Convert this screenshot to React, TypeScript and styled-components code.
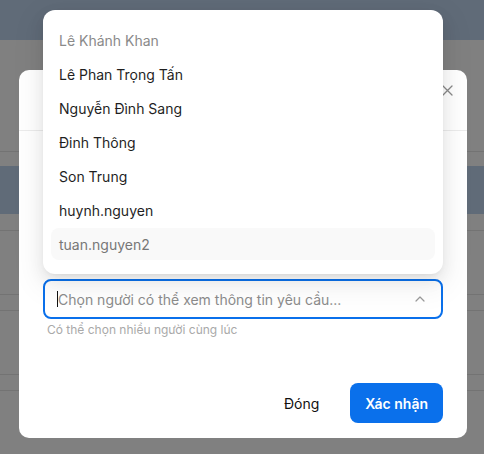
import React from "react";
import styled, { createGlobalStyle } from "styled-components";

const Global = createGlobalStyle`
  html, body { margin: 0; padding: 0; }
  body {
    font-family: Inter, "Noto Sans", "Liberation Sans", sans-serif;
    -webkit-font-smoothing: antialiased;
  }
  * { box-sizing: border-box; }
`;

const Page = styled.div`
  position: relative;
  width: 484px;
  height: 454px;
  overflow: hidden;
  background: #808080;
  display: flex;
  flex-direction: column;
`;

const TopBar = styled.div`
  height: 40px;
  background: #606b78;
  flex-shrink: 0;
`;

const BgRow = styled.div<{ $h: number; $band?: boolean; $line?: boolean }>`
  height: ${(p) => p.$h}px;
  flex-shrink: 0;
  background: ${(p) => (p.$band ? "#606b78" : "#808080")};
  border-bottom: ${(p) => (p.$line ? "1px solid #737373" : "none")};
`;

const Modal = styled.div`
  position: absolute;
  left: 19px;
  top: 70px;
  width: 448px;
  height: 368px;
  background: #fff;
  border-radius: 10px;
  display: flex;
  flex-direction: column;
  overflow: hidden;
`;

const ModalHeader = styled.div`
  height: 61px;
  flex-shrink: 0;
  border-bottom: 1px solid #ececec;
  display: flex;
  justify-content: flex-end;
  align-items: center;
  padding: 0 14px 0 24px;
`;

const CloseBtn = styled.button`
  border: 0;
  background: transparent;
  padding: 0;
  width: 12px;
  height: 12px;
  margin-top: -20px;
  display: flex;
  align-items: center;
  justify-content: center;
  color: #8a8a8a;
`;

const ModalBody = styled.div`
  flex: 1;
  display: flex;
  flex-direction: column;
  padding: 148px 24px 15px 24px;
`;

const Field = styled.div`
  display: flex;
  flex-direction: column;
`;

const SelectBox = styled.div`
  height: 40px;
  border: 2px solid #0a70eb;
  border-radius: 8px;
  display: flex;
  align-items: center;
  padding: 0 16px 0 12px;
  background: #fff;
`;

const Caret = styled.span`
  width: 1px;
  height: 16px;
  background: #111;
  flex-shrink: 0;
`;

const Placeholder = styled.span`
  flex: 1;
  font-size: 14px;
  color: #8c8c8c;
  white-space: nowrap;
`;

const Helper = styled.div`
  font-size: 12px;
  line-height: 20px;
  color: #a9a9a9;
  margin-top: 1px;
  padding-left: 4px;
`;

const Footer = styled.div`
  margin-top: auto;
  display: flex;
  justify-content: flex-end;
  align-items: center;
  gap: 15px;
`;

const Button = styled.button<{ $primary?: boolean }>`
  height: 40px;
  border: 0;
  border-radius: 8px;
  padding: 0 ${(p) => (p.$primary ? "15px" : "16px")};
  font-family: inherit;
  font-size: 14px;
  font-weight: ${(p) => (p.$primary ? 600 : 400)};
  background: ${(p) => (p.$primary ? "#0a70eb" : "transparent")};
  color: ${(p) => (p.$primary ? "#fff" : "#111")};
`;

const Dropdown = styled.div`
  position: absolute;
  left: 43px;
  top: 10px;
  width: 400px;
  height: 264px;
  background: #fff;
  border-radius: 12px;
  padding: 14px 8px;
  display: flex;
  flex-direction: column;
  gap: 2px;
  box-shadow: 0 6px 16px 0 rgba(0, 0, 0, 0.08),
    0 3px 6px -4px rgba(0, 0, 0, 0.12), 0 9px 28px 8px rgba(0, 0, 0, 0.05);
`;

const Option = styled.div<{ $tone: "muted" | "normal" | "active" }>`
  height: 32px;
  flex-shrink: 0;
  display: flex;
  align-items: center;
  padding: 0 8px;
  border-radius: 8px;
  font-size: 14px;
  color: ${(p) =>
    p.$tone === "muted" ? "#8a8a8a" : p.$tone === "active" ? "#777" : "#1f1f1f"};
  background: ${(p) => (p.$tone === "active" ? "#f9f9f9" : "transparent")};
`;

const options: { label: string; tone: "muted" | "normal" | "active" }[] = [
  { label: "Lê Khánh Khan", tone: "muted" },
  { label: "Lê Phan Trọng Tấn", tone: "normal" },
  { label: "Nguyễn Đình Sang", tone: "normal" },
  { label: "Đinh Thông", tone: "normal" },
  { label: "Son Trung", tone: "normal" },
  { label: "huynh.nguyen", tone: "normal" },
  { label: "tuan.nguyen2", tone: "active" },
];

export default function App() {
  return (
    <>
      <Global />
      <Page>
        <TopBar />
        <BgRow $h={112} $line />
        <BgRow $h={14} />
        <BgRow $h={48} $band />
        <BgRow $h={17} $line />
        <BgRow $h={64} $line />
        <BgRow $h={16} $line />
        <BgRow $h={64} $line />
        <BgRow $h={16} $line />

        <Modal>
          <ModalHeader>
            <CloseBtn aria-label="close">
              <svg width="11" height="11" viewBox="0 0 11 11">
                <path
                  d="M1 1 L10 10 M10 1 L1 10"
                  stroke="currentColor"
                  strokeWidth="1.3"
                  strokeLinecap="round"
                />
              </svg>
            </CloseBtn>
          </ModalHeader>
          <ModalBody>
            <Field>
              <SelectBox>
                <Caret />
                <Placeholder>Chọn người có thể xem thông tin yêu cầu...</Placeholder>
                <svg width="10" height="6" viewBox="0 0 10 6">
                  <path
                    d="M1 5 L5 1 L9 5"
                    fill="none"
                    stroke="#9a9a9a"
                    strokeWidth="1.2"
                    strokeLinecap="round"
                    strokeLinejoin="round"
                  />
                </svg>
              </SelectBox>
              <Helper>Có thể chọn nhiều người cùng lúc</Helper>
            </Field>
            <Footer>
              <Button>Đóng</Button>
              <Button $primary>Xác nhận</Button>
            </Footer>
          </ModalBody>
        </Modal>

        <Dropdown>
          {options.map((o) => (
            <Option key={o.label} $tone={o.tone}>
              {o.label}
            </Option>
          ))}
        </Dropdown>
      </Page>
    </>
  );
}
